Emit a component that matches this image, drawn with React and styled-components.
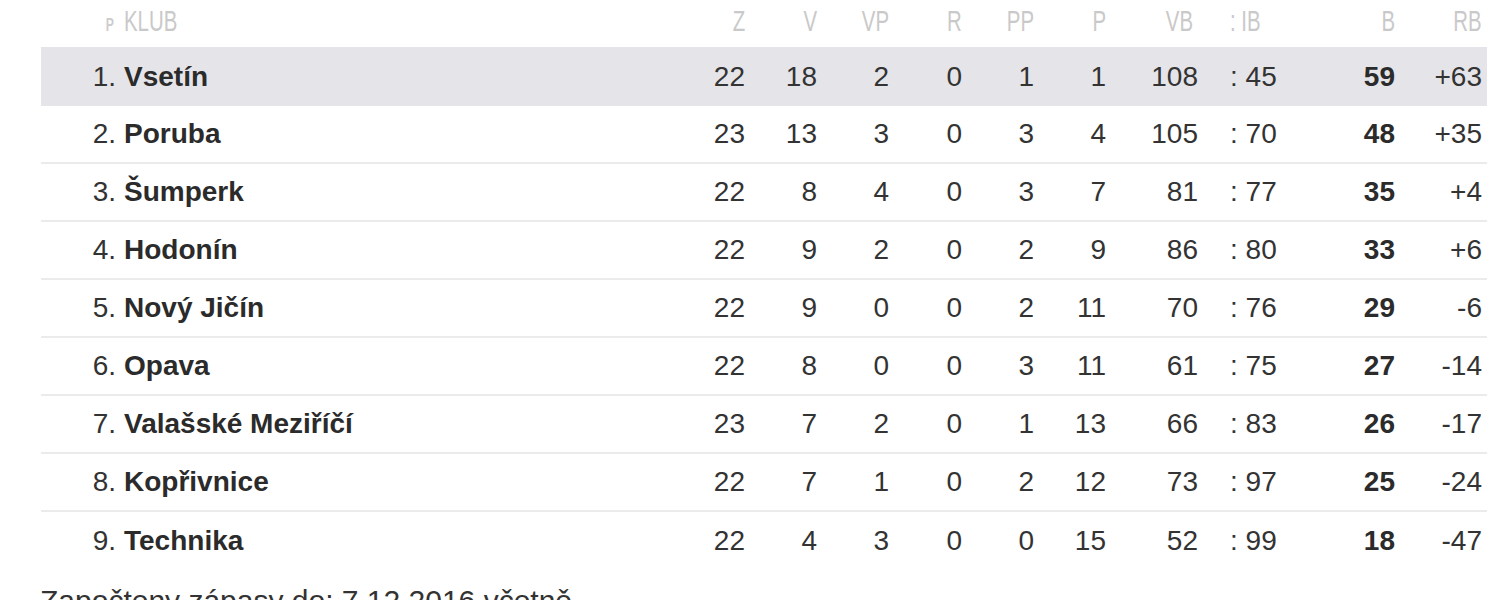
import React from 'react';
import styled, { createGlobalStyle } from 'styled-components';

const GlobalStyle = createGlobalStyle`
  body {
    margin: 0;
    background: #ffffff;
    font-family: "Liberation Sans", Arial, sans-serif;
  }
`;

// column widths, rank -> RB
const cols = '79px 560px 65px 72px 72px 73px 72px 72px 92px 102px 95px 87px';

const Page = styled.div`
  padding-left: 41px;
  width: 1446px;
`;

const Table = styled.div`
  display: flex;
  flex-direction: column;
`;

const HeadRow = styled.div`
  display: grid;
  grid-template-columns: ${cols};
  padding-right: 5px;
  padding-top: 3px;
  height: 47px;
  box-sizing: border-box;
  align-items: start;
`;

const Row = styled.div`
  display: grid;
  grid-template-columns: ${cols};
  padding-right: 5px;
  height: ${p => (p.$active ? 59 : 58)}px;
  align-items: center;
  box-sizing: border-box;
  background: ${p => (p.$active ? '#e5e5e9' : '#ffffff')};
  border-bottom: ${p => (p.$last || p.$active ? 'none' : '2px solid #ebebeb')};
  color: #333333;
  font-size: 28px;
`;

const HeadCell = styled.div`
  text-align: ${p => p.$align || 'right'};
  color: #c9c9c9;
  font-size: 30px;
  line-height: 36px;
  padding-left: ${p => p.$pl || 0}px;
  padding-right: ${p => p.$pr || 0}px;
`;

const Narrow = styled.span`
  display: inline-block;
  transform: scaleX(0.68);
  transform-origin: ${p => (p.$left ? 'left' : 'right')} center;
  white-space: nowrap;
`;

const SmallP = styled.span`
  font-size: 18px;
  font-weight: 700;
  color: #cdcdcd;
  display: inline-block;
  transform: scaleX(0.68);
  transform-origin: right center;
`;

const Cell = styled.div`
  text-align: ${p => p.$align || 'right'};
  font-weight: ${p => (p.$bold ? 700 : 400)};
  color: ${p => (p.$bold ? '#2b2b2b' : '#333333')};
  padding-left: ${p => p.$pl || 0}px;
  padding-right: ${p => p.$pr || 0}px;
  white-space: nowrap;
`;

const Footer = styled.div`
  margin-top: 14px;
  margin-left: -1px;
  font-size: 30px;
  line-height: 34px;
  color: #333333;
`;

const teams = [
  [1, 'Vsetín', 22, 18, 2, 0, 1, 1, 108, 45, 59, '+63'],
  [2, 'Poruba', 23, 13, 3, 0, 3, 4, 105, 70, 48, '+35'],
  [3, 'Šumperk', 22, 8, 4, 0, 3, 7, 81, 77, 35, '+4'],
  [4, 'Hodonín', 22, 9, 2, 0, 2, 9, 86, 80, 33, '+6'],
  [5, 'Nový Jičín', 22, 9, 0, 0, 2, 11, 70, 76, 29, '-6'],
  [6, 'Opava', 22, 8, 0, 0, 3, 11, 61, 75, 27, '-14'],
  [7, 'Valašské Meziříčí', 23, 7, 2, 0, 1, 13, 66, 83, 26, '-17'],
  [8, 'Kopřivnice', 22, 7, 1, 0, 2, 12, 73, 97, 25, '-24'],
  [9, 'Technika', 22, 4, 3, 0, 0, 15, 52, 99, 18, '-47'],
];

const App = () => {
  return (
    <Page>
      <GlobalStyle />
      <Table>
        <HeadRow>
          <HeadCell $pr={6}><SmallP>P</SmallP></HeadCell>
          <HeadCell $align="left" $pl={4}><Narrow $left>KLUB</Narrow></HeadCell>
          <HeadCell><Narrow>Z</Narrow></HeadCell>
          <HeadCell><Narrow>V</Narrow></HeadCell>
          <HeadCell><Narrow>VP</Narrow></HeadCell>
          <HeadCell><Narrow>R</Narrow></HeadCell>
          <HeadCell><Narrow>PP</Narrow></HeadCell>
          <HeadCell><Narrow>P</Narrow></HeadCell>
          <HeadCell $pr={5}><Narrow>VB</Narrow></HeadCell>
          <HeadCell $align="left" $pl={32}><Narrow $left>: IB</Narrow></HeadCell>
          <HeadCell><Narrow>B</Narrow></HeadCell>
          <HeadCell><Narrow>RB</Narrow></HeadCell>
        </HeadRow>
        {teams.map((t, i) => (
          <Row key={t[0]} $active={i === 0} $last={i === teams.length - 1}>
            <Cell $pr={4}>{t[0]}.</Cell>
            <Cell $align="left" $bold $pl={4}>{t[1]}</Cell>
            <Cell>{t[2]}</Cell>
            <Cell>{t[3]}</Cell>
            <Cell>{t[4]}</Cell>
            <Cell>{t[5]}</Cell>
            <Cell>{t[6]}</Cell>
            <Cell>{t[7]}</Cell>
            <Cell>{t[8]}</Cell>
            <Cell $align="left" $pl={32}>: {t[9]}</Cell>
            <Cell $bold>{t[10]}</Cell>
            <Cell>{t[11]}</Cell>
          </Row>
        ))}
      </Table>
      <Footer>Započteny zápasy do: 7.12.2016 včetně</Footer>
    </Page>
  );
};

export default App;
